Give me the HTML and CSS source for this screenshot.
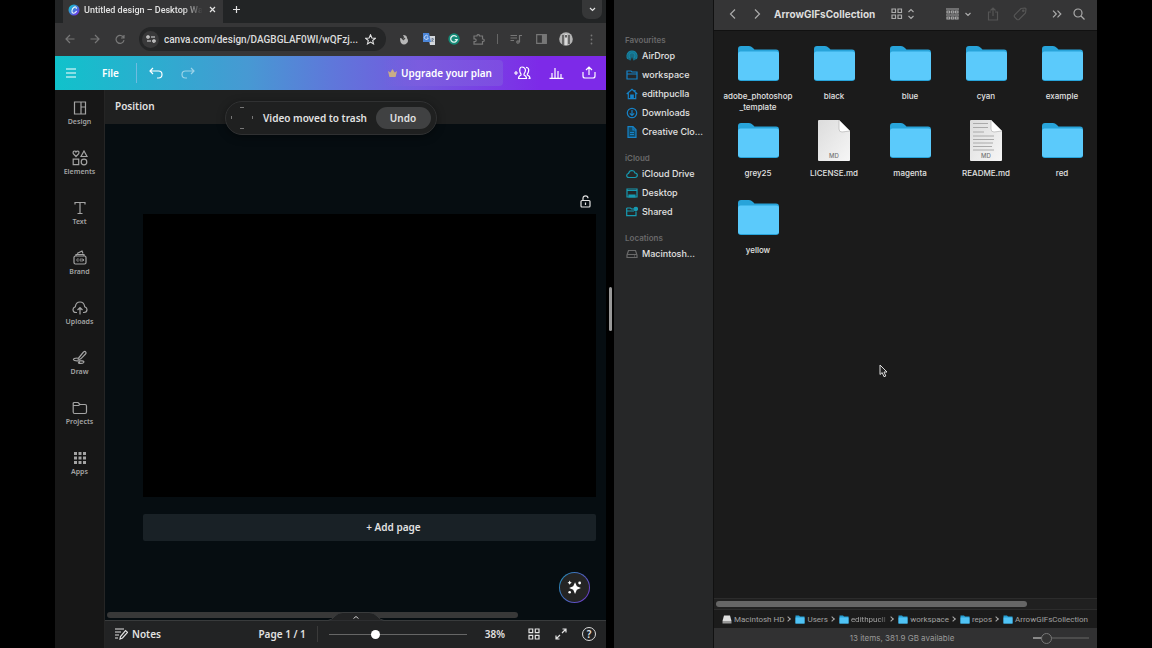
FILE: index.html
```html
<!DOCTYPE html>
<html lang="en">
<head>
<meta charset="utf-8">
<meta name="viewport" content="width=device-width, initial-scale=1">
<title>Untitled design – Desktop Wallpaper</title>
<link rel="stylesheet" href="styles.css">
</head>
<body>
<svg class="defs" aria-hidden="true">
  <linearGradient id="brand" x1="0" y1="0" x2="1" y2="1"><stop offset="0.1" stop-color="#12c3cf"/><stop offset="0.9" stop-color="#7431e8"/></linearGradient>
  <linearGradient id="paper" x1="0" y1="0" x2="1" y2="1"><stop offset="0" stop-color="#dcdcdc"/><stop offset="1" stop-color="#f6f6f6"/></linearGradient>
  <symbol id="folder" viewBox="0 0 41 35"><path fill="#28a4da" d="M0 3Q0 0 3 0H11Q13 0 15 2L16.500 3.500H38Q41 3.500 41 6.500V32Q41 35 38 35H3Q0 35 0 32Z"/><path fill="#5bcafb" d="M0 8Q0 5.500 2.500 5.500H38.500Q41 5.500 41 8V31.500Q41 34 38.500 34H2.500Q0 34 0 31.500Z"/></symbol>
  <symbol id="sheet" viewBox="0 0 32 41"><path fill="url(#paper)" d="M1 0H21L32 11V40Q32 41 31 41H1Q0 41 0 40V1Q0 0 1 0Z"/><path fill="#fff" stroke="#b3b3b3" stroke-width=".7" d="M21 0V9Q21 12 24 12L32 11Z"/></symbol>
  <symbol id="small-folder" viewBox="0 0 10 9"><path fill="#269fd4" d="M.5.500H4L5 1.500H9.500V8.500H.5Z"/><path fill="#50c3f5" d="M.5 2.500H9.500V8.500H.5Z"/></symbol>
</svg>

<div class="desktop">
  <section class="browser" aria-label="Browser">
    <div class="tabs">
      <div class="tab">
        <svg width="12" height="12" viewBox="0 0 12 12"><circle cx="6" cy="6" r="5.500" fill="url(#brand)"/><path d="M8.300 4.500C8.600 2.700 7.100 2.400 5.700 3.500C3.700 5 3.200 8.800 5.200 9.200C6.500 9.400 7.700 8.500 8.400 7.400" fill="none" stroke="#e8f4fb" stroke-width="1.100" stroke-linecap="round"/></svg>
        <span class="tab-title">Untitled design – Desktop Wa</span>
        <button class="icon" aria-label="Close tab"><svg width="7" height="7" viewBox="0 0 7 7"><path d="M1 1L6 6M6 1L1 6"/></svg></button>
      </div>
      <button class="icon new-tab" aria-label="New tab"><svg width="9" height="9" viewBox="0 0 9 9"><path d="M4.500 1V8M1 4.500H8"/></svg></button>
      <button class="icon tab-search" aria-label="Search tabs"><svg width="7" height="5" viewBox="0 0 7 5"><path d="M1 1L3.500 3.500L6 1"/></svg></button>
    </div>

    <div class="toolbar">
      <button class="icon dim" aria-label="Back"><svg width="10" height="10" viewBox="0 0 10 10"><path d="M9.500 5H1M5 1L1 5L5 9"/></svg></button>
      <button class="icon dim" aria-label="Forward"><svg width="10" height="10" viewBox="0 0 10 10"><path d="M.5 5H9M5 1L9 5L5 9"/></svg></button>
      <button class="icon dim" aria-label="Reload"><svg width="10" height="10" viewBox="0 0 10 10"><path d="M9 1V4H6M8.700 3.700A4 4 0 1 0 9 6.200"/></svg></button>
      <div class="address">
        <button class="icon site" aria-label="Site information"><svg width="10" height="8" viewBox="0 0 10 8"><circle cx="2" cy="2" r="1.200"/><path d="M5 2H9M1 6H5"/><circle cx="8" cy="6" r="1.200"/></svg></button>
        <input class="url" type="text" aria-label="Address" value="canva.com/design/DAGBGLAF0WI/wQFzj...">
        <button class="icon star" aria-label="Bookmark"><svg width="11" height="11" viewBox="0 0 12 12"><path d="M6 .9L7.500 4.400L11.200 4.700L8.400 7.100L9.300 10.800L6 8.800L2.700 10.800L3.600 7.100L.8 4.700L4.500 4.400Z"/></svg></button>
      </div>
      <button class="icon" aria-label="Extension"><svg width="10" height="11" viewBox="0 0 10 11"><path stroke="none" fill="#b8b8b8" d="M1 4Q3 4 4 6L5 3L4 1Q8 1 8 4Q10 7 8 9Q5 12 2 9Q1 7 1 4Z"/><path stroke="#444" d="M4 6L6 4"/></svg></button>
      <button class="icon" aria-label="Translate"><svg width="12" height="12" viewBox="0 0 12 12"><path stroke="none" fill="#d3d7dc" d="M5 3H12V12H7Z"/><path stroke="none" fill="#4c86d8" d="M0 0H6L8 9H0Z"/><path stroke="#cfe0f8" stroke-width=".9" d="M5 3.300A2 2 0 1 0 5.300 5H3.800"/><path stroke="#64748a" stroke-width=".8" d="M8 6H11M9.500 5V6M10.500 6L8.500 9M8.500 7L10.500 9"/></svg></button>
      <button class="icon" aria-label="Writing assistant"><svg width="12" height="12" viewBox="0 0 12 12"><circle cx="6" cy="6" r="5.700" fill="#158b78" stroke="none"/><path stroke="#e2f3ef" stroke-width="1.300" d="M8.700 4A3.300 3.300 0 1 0 9.200 6.700H6.800"/></svg></button>
      <button class="icon dim" aria-label="Extensions"><svg width="12" height="12" viewBox="0 0 12 12"><path d="M1 3H4V2.500A1.300 1.300 0 0 1 6.500 2.500V3H9.500V6H10A1.200 1.200 0 0 1 10 8.500H9.500V11.200H1V8.700H1.700A1.300 1.300 0 0 0 1.700 5.800H1Z"/></svg></button>
      <span class="tool-divider"></span>
      <button class="icon dim" aria-label="Media"><svg width="12" height="10" viewBox="0 0 12 10"><path d="M.5 1.500H7M.5 4H7M.5 6.500H4M9.500 8V1.500H12"/><circle cx="8" cy="8" r="1.200"/></svg></button>
      <button class="icon dim" aria-label="Side panel"><svg width="11" height="10" viewBox="0 0 11 10"><path d="M.7.700H10.300V9.300H.7Z"/><path fill="currentColor" d="M6.500 1H10V9H6.500Z"/></svg></button>
      <button class="icon" aria-label="Profile"><svg width="14" height="14" viewBox="0 0 14 14"><circle cx="7" cy="7" r="6.800" fill="#b4b4b4" stroke="none"/><path stroke="#484848" stroke-width="1.400" d="M4 3V13M10 3V12"/><path stroke="#e7e7e7" stroke-width="1.500" d="M7 2V13"/><path stroke="#303030" stroke-width="1.400" d="M7 3V5.500"/></svg></button>
      <button class="icon dim" aria-label="Menu"><svg width="3" height="11" viewBox="0 0 3 11"><g fill="currentColor" stroke="none"><circle cx="1.500" cy="1.500" r=".9"/><circle cx="1.500" cy="5.500" r=".9"/><circle cx="1.500" cy="9.500" r=".9"/></g></svg></button>
    </div>

    <header class="app-header">
      <button class="icon" aria-label="Main menu"><svg width="10" height="10" viewBox="0 0 10 10"><path d="M0 1H10M0 5H10M0 9H10"/></svg></button>
      <button class="file">File</button>
      <span class="header-divider"></span>
      <button class="icon undo" aria-label="Undo"><svg width="14" height="12" viewBox="0 0 14 12"><path d="M4 1L1 4L4 7M1 4H9.500Q13 4 13 7.500T9.500 11H8"/></svg></button>
      <button class="icon redo" aria-label="Redo"><svg width="14" height="12" viewBox="0 0 14 12"><path d="M10 1L13 4L10 7M13 4H4.500Q1 4 1 7.500T4.500 11H6"/></svg></button>
      <button class="upgrade"><svg width="9" height="8" viewBox="0 0 9 8"><path fill="#c9ad86" d="M0 2L2.300 3.500L4.500 0L6.700 3.500L9 2L7.600 8H1.400Z"/></svg>Upgrade your plan</button>
      <button class="icon" aria-label="Share with people"><svg width="17" height="14" viewBox="0 0 17 14"><path d="M0 7H4M2 5V9M8 1C5.500 1 5.500 4 6 6Q6.500 7.500 7 8V9Q4.500 10 4.500 12.500H12.500Q12.500 10 10 9V8Q11.500 6 11.500 4Q11 1 8 1ZM12 1.300Q15.500 1.500 14.500 5.500Q14 7.500 13.300 8V9Q16 10 16 12.500H14.500"/></svg></button>
      <button class="icon" aria-label="Insights"><svg width="15" height="12" viewBox="0 0 15 12"><path d="M.5 11.300H14.500M3 11V6M6 11V1M9 11V4M12 11V7"/></svg></button>
      <button class="icon" aria-label="Export"><svg width="14" height="13" viewBox="0 0 14 13"><path d="M1 6V10Q1 12 3 12H11Q13 12 13 10V6M7 9V1M4 4L7 1L10 4"/></svg></button>
    </header>

    <div class="workspace">
      <nav class="rail" aria-label="Tools">
        <a href="#design"><svg width="14" height="14" viewBox="0 0 14 14"><path d="M1.500 1H12.500V13H1.500ZM8 1V13M8 6H12.500"/></svg>Design</a>
        <a href="#elements"><svg width="16" height="16" viewBox="0 0 16 16"><path d="M4 6.500L1.300 3.600Q.6 1 2.600 1Q3.700 1 4 2Q4.500 1 5.600 1Q7.500 1.200 6.700 3.600ZM12 1L15 6.500H9ZM1.200 9.200H6.700V14.700H1.200Z"/><circle cx="12" cy="12" r="2.800"/></svg>Elements</a>
        <a href="#text"><svg width="14" height="14" viewBox="0 0 14 14"><path d="M2 3.500V1.500H12V3.500M7 1.500V12.500M4.500 12.500H9.500"/></svg>Text</a>
        <a href="#brand-kit"><svg width="14" height="15" viewBox="0 0 14 15"><rect x="1" y="6" width="12" height="8" rx="1.500"/><path d="M3 6V4.500H11V6M4 3.500L9 1L10 3.500"/><path stroke-width=".8" d="M5.800 9.200A1.200 1.200 0 1 0 5.800 10.800M8.500 9A1.100 1.100 0 1 0 8.500 11A1.100 1.100 0 1 0 8.500 9M10.500 9V11"/></svg>Brand</a>
        <a href="#uploads"><svg width="16" height="14" viewBox="0 0 16 14"><path d="M5 11.500H4Q1 11.500 1 8.500Q1 6.500 3.300 5.700Q4 1 8 1Q12 1 12.700 5.700Q15 6.500 15 8.500Q15 11.500 12 11.500H11M8 13.500V6.500M5.500 9L8 6.500L10.500 9"/></svg>Uploads</a>
        <a href="#draw"><svg width="15" height="15" viewBox="0 0 15 15"><path d="M7 7.500L11.500 2Q13 1 13.700 2T13.500 4L8.800 8.800Q7 9.800 6 9Q6 8 7 7.500ZM5.500 8Q1 8 1.500 9.800Q2 11 6 10.800H10Q12.700 11 11.500 12.700Q10.500 13.800 7 13.300Q5.500 12.500 8 12"/></svg>Draw</a>
        <a href="#projects"><svg width="16" height="14" viewBox="0 0 16 14"><path d="M1.200 11V2.500Q1.200 1.500 2.200 1.500H6L8 3.500H13Q14.500 3.500 14.500 5V11Q14.500 12.500 13 12.500H2.700Q1.200 12.500 1.200 11ZM1.500 4.500H6.500L8 3.500"/></svg>Projects</a>
        <a href="#apps"><svg width="12" height="12" viewBox="0 0 12 12"><path stroke-width="3" stroke-dasharray="3 1.500" d="M0 1.500H12M0 6H12M0 10.500H12"/></svg>Apps</a>
      </nav>

      <main class="editor">
        <div class="context-bar"><button>Position</button></div>
        <div class="stage">
          <div class="page-tools"><button class="icon" aria-label="Lock page"><svg width="11" height="13" viewBox="0 0 11 13"><rect x="1" y="5.500" width="9" height="6.500" rx="1"/><path d="M3 5.500V3.300A2.500 2.500 0 0 1 8 3.300M5.500 7.500V10"/></svg></button></div>
          <div class="page"></div>
          <button class="add-page">+ Add page</button>
          <button class="magic" aria-label="Quick actions"><svg width="15" height="15" viewBox="0 0 14 14"><path fill="#fff" d="M7.500 2L9.200 5.800L13 7.500L9.200 9.200L7.500 13L5.800 9.200L2 7.500L5.800 5.800ZM2.500.500L3.200 1.800L4.500 2.500L3.200 3.200L2.500 4.500L1.800 3.200L.5 2.500L1.800 1.800Z"/><circle cx="11.800" cy="2.800" r="1.300" fill="#fff"/><circle cx="2.500" cy="11.500" r="1.200" fill="#fff"/></svg></button>
          <div class="h-scroll"></div>
          <button class="drawer" aria-label="Show pages"><svg class="drawer-shape" width="56" height="9" viewBox="0 0 56 9"><path fill="#222324" stroke="#393b3c" d="M0 8.500Q4 8 7 4Q10 .5 15 .5H41Q46 .5 49 4Q52 8 56 8.500"/><path fill="none" stroke="#ccc" d="M25.500 6.500L28 4.500L30.500 6.500"/></svg></button>
        </div>
        <footer class="footer">
          <button class="notes"><svg width="13" height="12" viewBox="0 0 13 12"><path d="M0 1H9M0 4H6M0 7H4M0 10H3M5 11L5.500 8.500L10.500 2.500L12.500 4.300L7.500 10Z"/></svg>Notes</button>
          <button class="page-count">Page 1 / 1</button>
          <span class="footer-divider"></span>
          <input class="zoom" type="range" min="0" max="100" value="33" aria-label="Zoom">
          <button class="percent">38%</button>
          <button class="icon" aria-label="Grid view"><svg width="12" height="12" viewBox="0 0 12 12"><path d="M1 1H4.700V4.700H1ZM7.300 1H11V4.700H7.300ZM1 7.300H4.700V11H1ZM7.300 7.300H11V11H7.300Z"/></svg></button>
          <button class="icon" aria-label="Full screen"><svg width="12" height="12" viewBox="0 0 12 12"><path d="M7.500 1H11V4.500M11 1L7 5M1 7.500V11H4.500M1 11L5 7"/></svg></button>
          <button class="icon help" aria-label="Help">?</button>
        </footer>
      </main>
    </div>

    <div class="toast" role="status">
      <svg width="24" height="24" viewBox="0 0 24 24"><path fill="none" stroke="#777" stroke-width="1" d="M9 1.500H13M9 22.500H13M.5 10V13M21.500 10V13"/></svg>
      <span>Video moved to trash</span>
      <button>Undo</button>
    </div>
  </section>

  <div class="splitter"><span></span></div>

  <section class="finder" aria-label="Finder">
    <nav class="places" aria-label="Places">
      <h2>Favourites</h2>
      <a href="#airdrop"><svg width="12" height="12" viewBox="0 0 12 12"><circle cx="6" cy="6" r="5" fill="#176b83" stroke="none"/><path stroke="#1684a4" d="M2 9A5 5 0 1 1 10 9M4 8A3 3 0 1 1 8 8"/><path fill="#262728" stroke="none" d="M6 7L8 12H4Z"/></svg>AirDrop</a>
      <a href="#workspace"><svg width="12" height="12" viewBox="0 0 12 12"><path d="M1 2H5L6 3H11V10H1ZM1 5H11"/></svg>workspace</a>
      <a href="#home"><svg width="12" height="12" viewBox="0 0 12 12"><path d="M.7 6L6 1.300L11.300 6M2.300 5V10.700H9.700V5M9 2V4"/><path fill="currentColor" d="M4.800 7H7.200V10.500H4.800Z"/></svg>edithpuclla</a>
      <a href="#downloads"><svg width="12" height="12" viewBox="0 0 12 12"><circle cx="6" cy="6" r="4.700"/><path d="M6 3V8.500M3.800 6.300L6 8.500L8.200 6.300"/></svg>Downloads</a>
      <a href="#creative"><svg width="12" height="12" viewBox="0 0 12 12"><path fill="#134b66" d="M2 .7H7L10 3.700V11.300H2Z"/><path d="M7 1V4H10M4 6.500H8M4 8.500H8"/></svg>Creative Clo...</a>
      <h2>iCloud</h2>
      <a class="cyan" href="#icloud"><svg width="12" height="12" viewBox="0 0 12 12"><path d="M3 9.500Q.7 9.500.7 7.500Q.8 5.800 2.500 5.500Q3.200 2.500 6 2.500Q8.400 2.700 9 5Q11.300 5.200 11.300 7.300Q11.200 9.500 9 9.500Z"/></svg>iCloud Drive</a>
      <a class="cyan" href="#desktop"><svg width="12" height="12" viewBox="0 0 12 12"><path d="M1 2H11V10H1ZM1 3.500H11"/><path fill="currentColor" d="M3 8H9V10H3Z"/></svg>Desktop</a>
      <a class="cyan" href="#shared"><svg width="12" height="12" viewBox="0 0 12 12"><path d="M.7 2H4.500L5.500 3H8M.7 2V9.700H10V5.500M.7 5H8"/><circle cx="9.800" cy="3" r="1.700" fill="currentColor"/></svg>Shared</a>
      <h2>Locations</h2>
      <a class="grey" href="#macintosh"><svg width="12" height="12" viewBox="0 0 12 12"><path d="M1 7L2.500 2.500H9.500L11 7V9.500H1ZM1 6.500H11M8 8H9"/></svg>Macintosh...</a>
    </nav>

    <div class="files">
      <div class="finder-bar">
        <button class="icon" aria-label="Back"><svg width="8" height="12" viewBox="0 0 8 12"><path d="M6 1.500L1.500 6L6 10.500"/></svg></button>
        <button class="icon" aria-label="Forward"><svg width="8" height="12" viewBox="0 0 8 12"><path d="M2 1.500L6.500 6L2 10.500"/></svg></button>
        <h1>ArrowGIFsCollection</h1>
        <button class="icon view" aria-label="View"><svg width="24" height="12" viewBox="0 0 24 12"><path d="M1 1H4.500V4.500H1ZM7 1H10.500V4.500H7ZM1 7H4.500V10.500H1ZM7 7H10.500V10.500H7ZM17.500 4L20 1.500L22.500 4M17.500 8L20 10.500L22.500 8"/></svg></button>
        <button class="icon group" aria-label="Group by"><svg width="25" height="12" viewBox="0 0 25 12"><path d="M0 1H13M0 7H13M1 3H3.500V5H1ZM5.300 3H7.800V5H5.300ZM9.500 3H12V5H9.500ZM1 9H3.500V11H1ZM5.300 9H7.800V11H5.300ZM9.500 9H12V11H9.500ZM19.500 5L22 7.500L24.500 5"/></svg></button>
        <button class="icon faint" aria-label="Share"><svg width="12" height="14" viewBox="0 0 12 14"><path d="M4 5H1.500V13H10.500V5H8M6 9V1M3.500 3.500L6 1L8.500 3.500"/></svg></button>
        <button class="icon faint tag" aria-label="Tags"><svg width="14" height="14" viewBox="0 0 14 14"><path d="M8 1.500L12 1Q13 1 13 2L12.500 6L6 12.500Q5 13 4 12.500L1.500 10Q1 9 1.500 8Z"/><circle cx="10.300" cy="3.700" r=".7"/></svg></button>
        <button class="icon more" aria-label="More"><svg width="10" height="8" viewBox="0 0 10 8"><path d="M1 .7L4.300 4L1 7.300M5.500.700L8.800 4L5.500 7.300"/></svg></button>
        <button class="icon" aria-label="Search"><svg width="12" height="12" viewBox="0 0 12 12"><circle cx="5" cy="5" r="4"/><path d="M8 8L11.500 11.500"/></svg></button>
      </div>

      <ul class="grid">
        <li><span class="art"><svg class="folder"><use href="#folder"/></svg></span><span>adobe_photoshop<br>_template</span></li>
        <li><span class="art"><svg class="folder"><use href="#folder"/></svg></span><span>black</span></li>
        <li><span class="art"><svg class="folder"><use href="#folder"/></svg></span><span>blue</span></li>
        <li><span class="art"><svg class="folder"><use href="#folder"/></svg></span><span>cyan</span></li>
        <li><span class="art"><svg class="folder"><use href="#folder"/></svg></span><span>example</span></li>
        <li><span class="art"><svg class="folder"><use href="#folder"/></svg></span><span>grey25</span></li>
        <li><span class="art doc"><svg class="sheet"><use href="#sheet"/></svg><small>MD</small></span><span>LICENSE.md</span></li>
        <li><span class="art"><svg class="folder"><use href="#folder"/></svg></span><span>magenta</span></li>
        <li><span class="art doc"><svg class="sheet" viewBox="0 0 32 41"><use href="#sheet"/><path stroke="#aaa" d="M3 3.500H18M3 7.500H18M3 12H14M3 16H24M3 19.500H24M3 23H23M3 26.500H22M3 30H24"/></svg><small>MD</small></span><span>README.md</span></li>
        <li><span class="art"><svg class="folder"><use href="#folder"/></svg></span><span>red</span></li>
        <li><span class="art"><svg class="folder"><use href="#folder"/></svg></span><span>yellow</span></li>
      </ul>

      <div class="file-scroll"><span></span></div>
      <nav class="path" aria-label="Path">
        <a href="#hd"><svg viewBox="0 0 10 9"><path fill="#ddd" d="M2 .5H8L9.500 6H.5Z"/><path fill="#999" d="M.5 6H9.500V8.500H.5Z"/></svg><span>Macintosh HD</span></a><i></i>
        <a href="#users"><svg><use href="#small-folder"/></svg><span>Users</span></a><i></i>
        <a class="clip" href="#home-dir"><svg><use href="#small-folder"/></svg><span>edithpucll</span></a><i></i>
        <a href="#ws"><svg><use href="#small-folder"/></svg><span>workspace</span></a><i></i>
        <a href="#repos"><svg><use href="#small-folder"/></svg><span>repos</span></a><i></i>
        <a href="#arrow"><svg><use href="#small-folder"/></svg><span>ArrowGIFsCollection</span></a>
      </nav>
      <div class="status"><span>13 items, 381.9 GB available</span><input type="range" min="0" max="100" value="18" aria-label="Icon size"></div>
    </div>
  </section>
  <svg class="cursor" width="9" height="14" viewBox="0 0 9 14" aria-hidden="true"><path fill="#222" stroke="#ddd" stroke-width="1" d="M1 1V10.500L3.200 8.600L5 12.700L6.800 12L5 8H8Z"/></svg>
</div>
</body>
</html>
```
FILE: styles.css
```css
* { box-sizing: border-box; }

body {
  margin: 0;
  background: #000;
  color: #e2e2e2;
  font-family: "Noto Sans", "Open Sans", sans-serif;
}

button {
  padding: 0;
  border: 0;
  background: none;
  color: inherit;
  font: inherit;
  white-space: nowrap;
}

a { color: inherit; text-decoration: none; }
svg { display: block; flex: none; }
.defs { position: absolute; width: 0; height: 0; }

.icon {
  display: flex;
  align-items: center;
  justify-content: center;
  flex: none;
}

.icon svg,
.rail svg,
.notes svg,
.places svg {
  fill: none;
  stroke: currentColor;
  stroke-width: 1.2;
}

.dim { color: #777; }

.desktop {
  position: relative;
  display: grid;
  grid-template-columns: 551fr 8px 483fr;
  min-height: 100vh;
  padding: 0 55px;
  overflow: hidden;
}

/* Browser window */
.browser {
  position: relative;
  display: flex;
  flex-direction: column;
  min-width: 0;
}

.tabs {
  display: flex;
  align-items: center;
  height: 23px;
  padding: 0 4px 4px 8px;
  background: #222425;
  font: 500 9px Roboto, sans-serif;
}

.tab {
  display: flex;
  align-items: center;
  gap: 4px;
  width: 160px;
  height: 23px;
  margin-bottom: -4px;
  padding: 0 7px 4px 5px;
  background: #363637;
}

.tab-title {
  flex: 1;
  white-space: nowrap;
  mask-image: linear-gradient(90deg, #000 82%, transparent 98%);
}

.new-tab { margin-left: 9px; }

.tab-search {
  width: 20px;
  height: 19px;
  margin-left: auto;
  border-radius: 0 0 7px 7px;
  background: #363738;
}

.toolbar {
  display: flex;
  align-items: center;
  gap: 1px;
  height: 33px;
  padding: 0 3px 1px;
  background: #363637;
}

.toolbar > .icon { width: 24px; height: 24px; }

.address {
  display: flex;
  flex: 1;
  align-items: center;
  min-width: 0;
  height: 24px;
  margin: 0 5px 0 6px;
  padding: 0 10px 0 3px;
  border-radius: 12px;
  background: #252627;
}

.site {
  width: 17px;
  height: 17px;
  border-radius: 50%;
  background: #39393a;
}

.url {
  flex: 1;
  min-width: 0;
  margin: 0 0 0 5px;
  padding: 0;
  border: 0;
  background: none;
  color: #dcdcdc;
  font: 500 10px Roboto, sans-serif;
}

.tool-divider {
  width: 1px;
  height: 10px;
  margin: 0 5px;
  background: #666;
}

.app-header {
  display: flex;
  align-items: center;
  height: 34px;
  padding: 0 10px 1px 11px;
  background: linear-gradient(90deg, #10c2cb, #4799d3 35%, #5e78da 50%, #7459df 66%, #7d2ae8 88%);
  color: #fff;
  font-size: 10px;
  font-weight: 600;
}

.file { margin: 0 17px 0 26px; }
.header-divider { width: 1px; height: 20px; background: #6fbce0; }
.undo { margin: 0 18px 0 12px; }
.redo { opacity: .5; }

.upgrade {
  display: flex;
  align-items: center;
  justify-content: flex-end;
  gap: 4px;
  width: 120px;
  height: 26px;
  margin: 0 11px 0 auto;
  padding-right: 11px;
  border-radius: 4px;
  background: linear-gradient(90deg, transparent, #8160df80 30%);
}

.upgrade + .icon ~ .icon { margin-left: 18px; }

.workspace { display: flex; flex: 1; }

.rail {
  display: flex;
  flex-direction: column;
  width: 49px;
  padding-top: 8px;
  background: #171717;
  color: #a4a4a4;
  font-size: 7px;
  font-weight: 600;
  line-height: 10px;
}

.rail a {
  display: grid;
  grid-template-rows: 19px 10px;
  place-items: center;
  align-content: start;
  height: 50px;
}

.editor {
  display: flex;
  flex: 1;
  flex-direction: column;
  min-width: 0;
  border-left: 1px solid #252525;
  background: #060d11;
}

.context-bar {
  display: flex;
  align-items: center;
  height: 34px;
  padding: 0 10px 2px;
  background: #1f2020;
  font-size: 10px;
  font-weight: 600;
}

.stage {
  position: relative;
  flex: 1;
  padding: 0 10px 79px 38px;
}

.page-tools {
  display: flex;
  justify-content: flex-end;
  padding: 71px 5px 6px;
}

.page { aspect-ratio: 453 / 283; background: #000; }

.add-page {
  width: 100%;
  height: 27px;
  margin-top: 17px;
  padding: 0 0 1px 48px;
  border-radius: 2px;
  background: #192126;
  font-size: 10px;
  font-weight: 600;
}

.magic {
  position: absolute;
  right: 16px;
  bottom: 17px;
  display: grid;
  place-items: center;
  width: 31px;
  height: 31px;
  border: 1px solid transparent;
  border-radius: 50%;
  background: linear-gradient(#242424, #242424) padding-box, linear-gradient(120deg, #2193b5, #7734c9) border-box;
}

.h-scroll {
  position: absolute;
  bottom: 2px;
  left: 2px;
  width: 82%;
  height: 6px;
  border-radius: 3px;
  background: #383838;
}

.drawer {
  position: absolute;
  bottom: -1px;
  left: 50%;
  transform: translateX(-50%);
}

.footer {
  display: flex;
  align-items: center;
  height: 28px;
  padding: 0 10px 1px;
  border-top: 1px solid #393b3c;
  background: #222324;
  font-size: 10px;
  font-weight: 600;
}

.notes { display: flex; align-items: center; gap: 4px; margin-right: auto; }
.footer-divider { width: 1px; height: 16px; margin: 0 11px; background: #3a3a3a; }
.percent { margin: 0 23px 0 18px; }
.footer .icon + .icon { margin-left: 15px; }

.footer .help {
  width: 14px;
  height: 14px;
  border: 1px solid #ddd;
  border-radius: 50%;
  line-height: 12px;
}

input[type="range"] {
  height: 12px;
  margin: 0;
  appearance: none;
  background: linear-gradient(#666, #666) center / 100% 1px no-repeat;
}

.zoom { width: 138px; }

input[type="range"]::-webkit-slider-thumb {
  width: 9px;
  height: 9px;
  appearance: none;
  border-radius: 50%;
  background: #fff;
}

.toast {
  position: absolute;
  top: 101px;
  left: 50%;
  display: flex;
  align-items: center;
  width: 212px;
  height: 34px;
  padding: 0 5px;
  transform: translateX(-50%);
  border: 1px solid #303132;
  border-radius: 17px;
  background: #1f2020;
  box-shadow: 0 2px 8px #0006;
  font-size: 10px;
  font-weight: 600;
  white-space: nowrap;
}

.toast span { margin: 0 auto; }

.toast button {
  width: 55px;
  height: 22px;
  border-radius: 11px;
  background: #404142;
}

.splitter { display: grid; place-items: center; padding: 0 2px 30px; }
.splitter span { width: 3px; height: 44px; border-radius: 2px; background: #999; }

/* Finder window */
.finder {
  display: flex;
  min-width: 0;
  font-family: Inter, sans-serif;
}

.places {
  width: 99px;
  padding: 34px 4px 0 11px;
  background: #262728;
  font-size: 9px;
  font-weight: 500;
}

.places h2 {
  margin: 0;
  color: #69696a;
  font-size: 8px;
  font-weight: 600;
  line-height: 12px;
}

.places a + h2 { margin-top: 11px; }

.places a {
  display: flex;
  align-items: center;
  gap: 4px;
  height: 19px;
  padding-left: 1px;
  white-space: nowrap;
}

.places svg { color: #1683c8; }
.places .cyan svg { color: #179bb2; }
.places .grey svg { color: #6a6a6a; }

.files {
  display: flex;
  flex: 1;
  flex-direction: column;
  min-width: 0;
  border-left: 1px solid #111;
  background: #1b1b1b;
}

.finder-bar {
  display: flex;
  align-items: center;
  height: 31px;
  padding: 0 12px 3px 15px;
  border-bottom: 1px solid #111;
  background: #353536;
  color: #aaa;
}

.finder-bar .icon + .icon { margin-left: 16px; }

.finder-bar h1 {
  margin: 0 auto 0 13px;
  color: #ddd;
  font-size: 10px;
  font-weight: 700;
}

.finder-bar .icon.group { margin-left: 31px; }
.finder-bar .faint { color: #555; }
.finder-bar .icon.tag { margin-left: 14px; }
.finder-bar .icon.more { margin-left: 25px; }
.finder-bar .more + .icon { margin-left: 11px; }

.grid {
  display: grid;
  flex: 1;
  grid-template-columns: repeat(5, 70px);
  grid-auto-rows: 77px;
  align-content: start;
  column-gap: 6px;
  margin: 0;
  padding: 11px 0 0 9px;
  overflow: hidden;
  list-style: none;
  font-size: 8px;
  font-weight: 500;
  line-height: 11px;
  text-align: center;
}

.grid li {
  display: flex;
  flex-direction: column;
  align-items: center;
  gap: 6px;
}

.art { display: grid; place-items: center; height: 43px; }
.folder { width: 41px; height: 35px; }
.sheet { width: 32px; height: 41px; }
.art > * { grid-area: 1 / 1; }
.doc small { align-self: end; padding-bottom: 1px; color: #777; font-size: 6px; }

.file-scroll {
  padding: 2px;
  border: solid #2c2c2c;
  border-width: 1px 0;
  background: #202020;
}

.file-scroll span { display: block; width: 82%; height: 6px; border-radius: 3px; background: #666; }

.path {
  display: flex;
  align-items: center;
  height: 18px;
  padding: 0 9px 0 8px;
  color: #a2a2a2;
  font: 8px Roboto, sans-serif;
  white-space: nowrap;
}

.path a { display: flex; align-items: center; gap: 2px; }
.path svg { width: 10px; height: 9px; }
.path .clip { flex: 1; }
.path .clip span { mask-image: linear-gradient(90deg, #000 80%, #0006); }

.path i {
  width: 4px;
  height: 4px;
  margin: 0 5px 0 2px;
  flex: none;
  transform: rotate(45deg);
  border: solid #aaa;
  border-width: 1px 1px 0 0;
}

.status {
  display: flex;
  align-items: center;
  justify-content: flex-end;
  height: 20px;
  padding: 0 8px;
  background: #313132;
  color: #999;
  font-size: 8px;
}

.status span { flex: 1; padding-left: 49px; text-align: center; }
.status input { width: 56px; background: linear-gradient(90deg, #888 20%, #4c4c4c 20%) center / 100% 2px no-repeat; }

.status input::-webkit-slider-thumb {
  width: 11px;
  height: 11px;
  border: 1px solid #777;
  background: #333;
}

.cursor { position: absolute; top: 364px; left: 879px; }
```
